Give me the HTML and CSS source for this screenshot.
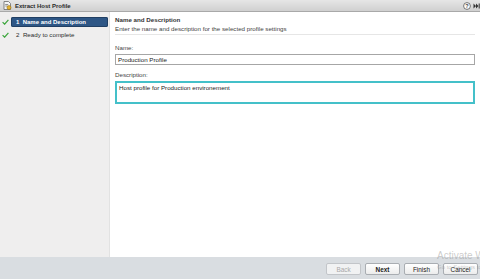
FILE: index.html
```html
<!DOCTYPE html>
<html lang="en">
<head>
    <meta charset="UTF-8">
    <title>Extract Host Profile</title>
    <link rel="stylesheet" href="styles.css">
</head>
<body>
    <div class="window">
        <div class="titlebar">
            <svg class="title-icon" width="9" height="9" viewBox="0 0 9 9">
                <path d="M1 0.5h4.5l2 2v6h-6.5z" fill="#f4f4f4" stroke="#6b6b6b" stroke-width="0.8"/>
                <rect x="2.2" y="3" width="3" height="0.8" fill="#7a7a7a"/>
                <rect x="2.2" y="4.6" width="2.4" height="0.8" fill="#7a7a7a"/>
                <circle cx="6" cy="6.6" r="2" fill="#e5b531" stroke="#9a6f10" stroke-width="0.6"/>
            </svg>
            <span class="title-text">Extract Host Profile</span>
            <div class="title-tools">
                <svg width="8" height="8" viewBox="0 0 8 8">
                    <circle cx="4" cy="4" r="3.4" fill="#fff" stroke="#555" stroke-width="0.8"/>
                    <text x="4" y="6.2" text-anchor="middle" font-size="5.5" font-family="Liberation Sans, sans-serif" font-weight="bold" fill="#444">?</text>
                </svg>
                <svg width="7" height="8" viewBox="0 0 7 8">
                    <path d="M0.5 1.5l2.5 2.5-2.5 2.5z M3 1.5l2.5 2.5-2.5 2.5z" fill="#333"/>
                    <rect x="5.7" y="1.5" width="1" height="5" fill="#333"/>
                </svg>
            </div>
        </div>

        <div class="main">
            <div class="sidebar">
                <div class="step">
                    <svg class="check" width="7" height="6" viewBox="0 0 7 6">
                        <path d="M0.6 3.2l2 2 3.8-4.4" fill="none" stroke="#3aa53a" stroke-width="1.2"/>
                    </svg>
                    <span class="step-label active">1&nbsp; Name and Description</span>
                </div>
                <div class="step">
                    <svg class="check" width="7" height="6" viewBox="0 0 7 6">
                        <path d="M0.6 3.2l2 2 3.8-4.4" fill="none" stroke="#3aa53a" stroke-width="1.2"/>
                    </svg>
                    <span class="step-label">2&nbsp; Ready to complete</span>
                </div>
            </div>

            <div class="content">
                <div class="page-header">
                    <div class="page-title">Name and Description</div>
                    <div class="page-subtitle">Enter the name and description for the selected profile settings</div>
                </div>

                <div class="field">
                    <label class="field-label">Name:</label>
                    <div class="text-input">Production Profile</div>
                </div>

                <div class="field field-desc">
                    <label class="field-label">Description:</label>
                    <div class="text-area">Host profile for Production environement</div>
                </div>
            </div>
        </div>

        <div class="footer">
            <button class="btn" disabled>Back</button>
            <button class="btn btn-next">Next</button>
            <button class="btn">Finish</button>
            <button class="btn">Cancel</button>
        </div>

        <div class="watermark">
            <div class="wm-big">Activate Windows</div>
            <div class="wm-small">Go to Settings to activate Windows.</div>
        </div>
    </div>
</body>
</html>
```

FILE: styles.css
```css
body, html {
    margin: 0;
    padding: 0;
    width: 480px;
    height: 279px;
    overflow: hidden;
    font-family: "Liberation Sans", Arial, sans-serif;
    color: #333;
}
.window {
    position: relative;
    display: flex;
    flex-direction: column;
    width: 480px;
    height: 279px;
    overflow: hidden;
    background: #fff;
}
/* Barra de titulo */
.titlebar {
    display: flex;
    align-items: center;
    height: 11px;
    padding-left: 3px;
    background: linear-gradient(#e6e6e6, #d0d0d0);
    border-bottom: 1px solid #a9a9a9;
}
.title-icon {
    margin-right: 3px;
}
.title-text {
    font-size: 6px;
    font-weight: bold;
    color: #2a2a2a;
}
.title-tools {
    margin-left: auto;
    display: flex;
    align-items: center;
    gap: 2px;
}
.main {
    flex: 1;
    display: flex;
    min-height: 0;
}
.sidebar {
    width: 109px;
    background: #efeeee;
    border-right: 1px solid #e2e2e2;
    padding-top: 5px;
    display: flex;
    flex-direction: column;
    gap: 3px;
}
.step {
    display: flex;
    align-items: center;
    height: 10px;
    padding-left: 2px;
}
.check {
    margin-right: 2px;
}
.step-label {
    display: block;
    width: 92px;
    height: 10px;
    line-height: 10px;
    padding-left: 5px;
    font-size: 6.2px;
    color: #2b2b2b;
    border-radius: 2px;
}
.step-label.active {
    background: #2e5685;
    box-shadow: inset 0 0 0 1px #213f63;
    font-weight: bold;
    font-size: 6px;
    color: #fff;
}
.content {
    flex: 1;
    padding: 3px 5px 0 5px;
}
.page-header {
    padding-bottom: 1px;
    border-bottom: 1px solid #e6e6e6;
}
.page-title {
    font-size: 6.2px;
    font-weight: bold;
    line-height: 9px;
    color: #333;
}
.page-subtitle {
    font-size: 6.2px;
    line-height: 9px;
    color: #444;
}
.field {
    margin-top: 9px;
}
.field-desc {
    margin-top: 6px;
}
.field-label {
    display: block;
    font-size: 6.2px;
    line-height: 8px;
    color: #444;
    margin-bottom: 2px;
}
.text-input {
    box-sizing: border-box;
    height: 11px;
    border: 1px solid #a6a6a6;
    padding-left: 2px;
    font-size: 6.2px;
    line-height: 9px;
    color: #222;
}
.text-area {
    box-sizing: border-box;
    height: 23px;
    border: 2px solid #44c0c9;
    padding: 1px 2px;
    font-size: 6.2px;
    line-height: 7px;
    color: #222;
}
/* Rodape com botoes */
.footer {
    height: 22px;
    background: #d9dde1;
    display: flex;
    justify-content: flex-end;
    align-items: flex-start;
    gap: 4px;
    padding: 6px 2px 0 0;
    box-sizing: border-box;
}
.btn {
    width: 35px;
    height: 12px;
    padding: 0;
    font-family: "Liberation Sans", Arial, sans-serif;
    font-size: 6.4px;
    color: #222;
    background: linear-gradient(#ffffff, #ececec);
    border: 1px solid #a9adb2;
    border-radius: 2px;
}
.btn:disabled {
    color: #a8a8a8;
    background: #f1f2f3;
    border-color: #c2c5c9;
}
.btn-next {
    font-weight: bold;
}
.watermark {
    position: absolute;
    left: 437px;
    top: 250px;
    white-space: nowrap;
    color: rgba(140, 140, 140, 0.45);
    pointer-events: none;
}
.wm-big {
    font-size: 10px;
    line-height: 11px;
}
.wm-small {
    font-size: 6px;
    line-height: 8px;
    margin-top: 2px;
}
```
